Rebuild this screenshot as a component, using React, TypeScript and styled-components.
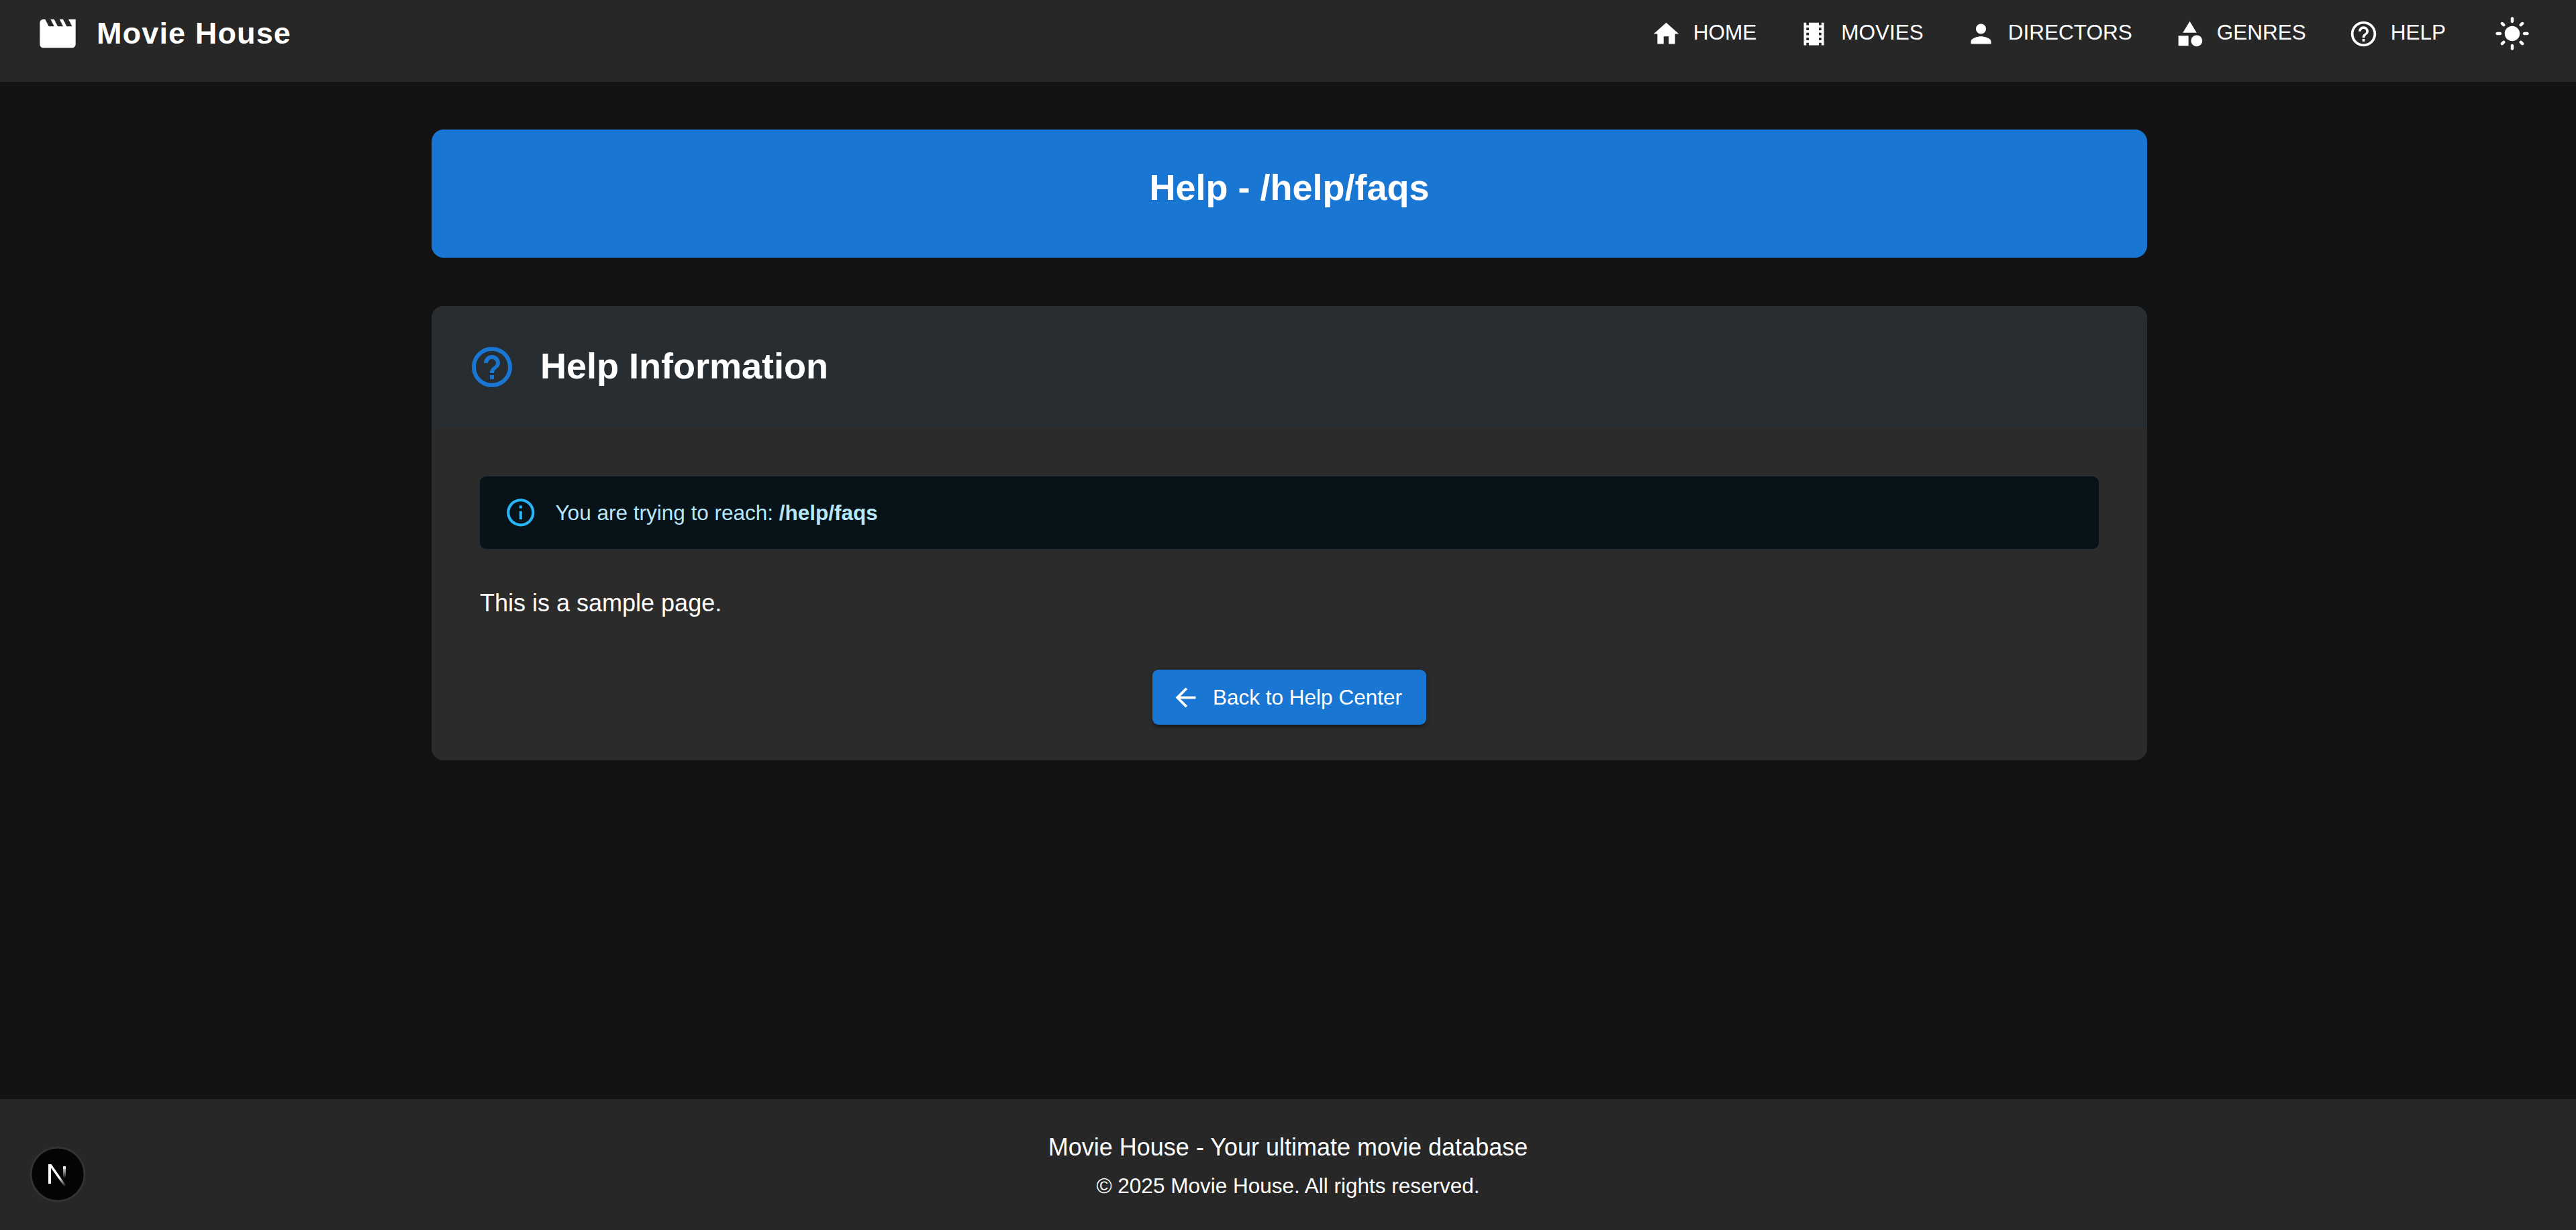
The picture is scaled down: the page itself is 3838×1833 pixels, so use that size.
import styled, { createGlobalStyle } from "styled-components";

const GlobalStyle = createGlobalStyle`
  html, body {
    margin: 0;
    padding: 0;
    background: #121212;
    color: #fff;
    font-family: "Liberation Sans", Arial, sans-serif;
  }
`;

const icons: Record<string, string> = {
  movie: "m18 4 2 4h-3l-2-4h-2l2 4h-3l-2-4H8l2 4H7L5 4H4c-1.1 0-1.99.9-1.99 2L2 18c0 1.1.9 2 2 2h16c1.1 0 2-.9 2-2V4h-4z",
  home: "M10 20v-6h4v6h5v-8h3L12 3 2 12h3v8z",
  film: "M18 3v2h-2V3H8v2H6V3H4v18h2v-2h2v2h8v-2h2v2h2V3h-2zM8 17H6v-2h2v2zm0-4H6v-2h2v2zm0-4H6V7h2v2zm10 8h-2v-2h2v2zm0-4h-2v-2h2v2zm0-4h-2V7h2v2z",
  person: "M12 12c2.21 0 4-1.79 4-4s-1.79-4-4-4-4 1.79-4 4 1.79 4 4 4zm0 2c-2.67 0-8 1.34-8 4v2h16v-2c0-2.66-5.33-4-8-4z",
  category: "m12 2-5.5 9h11zM17.5 13a4.5 4.5 0 1 0 0 9 4.5 4.5 0 0 0 0-9zM3 13.5h8v8H3z",
  help: "M11 18h2v-2h-2v2zm1-16C6.48 2 2 6.48 2 12s4.48 10 10 10 10-4.48 10-10S17.52 2 12 2zm0 18c-4.41 0-8-3.59-8-8s3.59-8 8-8 8 3.59 8 8-3.59 8-8 8zm0-14c-2.21 0-4 1.79-4 4h2c0-1.1.9-2 2-2s2 .9 2 2c0 2-3 1.75-3 5h2c0-2.25 3-2.5 3-5 0-2.21-1.79-4-4-4z",
  sun: "M12 7c-2.76 0-5 2.24-5 5s2.24 5 5 5 5-2.24 5-5-2.24-5-5-5zM2 13h2c.55 0 1-.45 1-1s-.45-1-1-1H2c-.55 0-1 .45-1 1s.45 1 1 1zm18 0h2c.55 0 1-.45 1-1s-.45-1-1-1h-2c-.55 0-1 .45-1 1s.45 1 1 1zM11 2v2c0 .55.45 1 1 1s1-.45 1-1V2c0-.55-.45-1-1-1s-1 .45-1 1zm0 18v2c0 .55.45 1 1 1s1-.45 1-1v-2c0-.55-.45-1-1-1s-1 .45-1 1zM5.99 4.58c-.39-.39-1.03-.39-1.41 0-.39.39-.39 1.03 0 1.41l1.06 1.06c.39.39 1.03.39 1.41 0s.39-1.03 0-1.41L5.99 4.58zm12.37 12.37c-.39-.39-1.03-.39-1.41 0-.39.39-.39 1.03 0 1.41l1.06 1.06c.39.39 1.03.39 1.41 0 .39-.39.39-1.03 0-1.41l-1.06-1.06zm1.06-10.96c.39-.39.39-1.03 0-1.41-.39-.39-1.03-.39-1.41 0l-1.06 1.06c-.39.39-.39 1.03 0 1.41s1.03.39 1.41 0l1.06-1.06zM7.05 18.36c.39-.39.39-1.03 0-1.41-.39-.39-1.03-.39-1.41 0l-1.06 1.06c-.39.39-.39 1.03 0 1.41s1.03.39 1.41 0l1.06-1.06z",
  info: "M11 7h2v2h-2zm0 4h2v6h-2zm1-9C6.48 2 2 6.48 2 12s4.48 10 10 10 10-4.48 10-10S17.52 2 12 2zm0 18c-4.41 0-8-3.59-8-8s3.59-8 8-8 8 3.59 8 8-3.59 8-8 8z",
  back: "M20 11H7.83l5.59-5.59L12 4l-8 8 8 8 1.41-1.41L7.83 13H20v-2z",
};

const Svg = styled.svg<{ $size: number; $color?: string }>`
  width: ${(p) => p.$size}px;
  height: ${(p) => p.$size}px;
  flex-shrink: 0;
  display: block;
  fill: ${(p) => p.$color || "#fff"};
`;

function Icon({ name, size, color }: { name: string; size: number; color?: string }) {
  return (
    <Svg viewBox="0 0 24 24" $size={size} $color={color}>
      <path d={icons[name]} />
    </Svg>
  );
}

const Page = styled.div`
  min-height: 100vh;
  display: flex;
  flex-direction: column;
  position: relative;
`;

const Header = styled.header`
  height: 122px;
  box-sizing: border-box;
  padding: 0 54px 22px;
  background: #272727;
  display: flex;
  align-items: center;
  justify-content: space-between;
`;

const Brand = styled.div`
  display: flex;
  align-items: center;
  gap: 26px;
`;

const BrandName = styled.div`
  font-size: 45px;
  font-weight: 700;
  letter-spacing: 1.125px;
  line-height: 1;
  margin-top: -2px;
`;

const Nav = styled.nav`
  display: flex;
  align-items: center;
`;

const NavLinks = styled.div`
  display: flex;
  align-items: center;
  gap: 63px;
`;

const NavLink = styled.a`
  display: flex;
  align-items: center;
  gap: 18px;
  font-size: 31.5px;
  line-height: 1;
  color: #fff;
  text-transform: uppercase;
`;

const NavLabel = styled.span`
  margin-top: -3px;
`;

const ThemeToggle = styled.button`
  margin-left: 72px;
  margin-right: 14px;
  padding: 0;
  border: 0;
  background: none;
  color: #fff;
  display: flex;
`;

const Main = styled.main`
  flex: 1;
  margin: 0 639px 0 643px;
  padding-top: 71px;
`;

const Hero = styled.section`
  height: 191px;
  box-sizing: border-box;
  padding-top: 54px;
  margin-bottom: 72px;
  background: #1976d2;
  border-radius: 18px;
  text-align: center;
`;

const HeroTitle = styled.h1`
  margin: 0;
  font-size: 54px;
  font-weight: 700;
  line-height: 64px;
`;

const Card = styled.section`
  background: #2b2b2b;
  border-radius: 18px;
  overflow: hidden;
`;

const CardHeader = styled.div`
  height: 181px;
  box-sizing: border-box;
  padding: 0 54px;
  display: flex;
  align-items: center;
  gap: 36px;
  background: #282d31;
`;

const CardTitle = styled.h2`
  margin: 0;
  font-size: 54px;
  font-weight: 700;
  line-height: 1.2;
  margin-top: -2px;
`;

const CardBody = styled.div`
  padding: 73px 72px 53px;
`;

const Notice = styled.div`
  height: 108px;
  box-sizing: border-box;
  padding: 0 36px;
  display: flex;
  align-items: center;
  gap: 27px;
  background: #071318;
  color: #b8e7fb;
  border-radius: 9px;
  font-size: 31.5px;
`;

const SampleText = styled.p`
  margin: 0;
  padding-top: 57px;
  font-size: 36px;
  line-height: 48px;
`;

const Actions = styled.div`
  display: flex;
  justify-content: center;
  padding-top: 75px;
`;

const BackButton = styled.a`
  height: 82px;
  box-sizing: border-box;
  padding: 0 36px 0 27px;
  display: flex;
  align-items: center;
  gap: 18px;
  background: #1976d2;
  color: #fff;
  border-radius: 9px;
  font-size: 31.5px;
  box-shadow: 0 7px 3px -4px rgba(0, 0, 0, 0.2), 0 4px 5px 0 rgba(0, 0, 0, 0.14), 0 2px 10px 0 rgba(0, 0, 0, 0.12);
`;

const Footer = styled.footer`
  height: 195px;
  box-sizing: border-box;
  padding-top: 49px;
  background: #272727;
  text-align: center;
`;

const Tagline = styled.div`
  font-size: 36px;
  line-height: 46px;
`;

const Copyright = styled.div`
  margin-top: 14px;
  font-size: 31.5px;
  line-height: 40px;
`;

const DevBadge = styled.div`
  position: absolute;
  left: 44px;
  bottom: 41px;
  width: 84px;
  height: 84px;
`;

const navItems = [
  { label: "Home", icon: "home" },
  { label: "Movies", icon: "film" },
  { label: "Directors", icon: "person" },
  { label: "Genres", icon: "category" },
  { label: "Help", icon: "help" },
];

export default function App() {
  return (
    <Page>
      <GlobalStyle />
      <Header>
        <Brand>
          <Icon name="movie" size={64} />
          <BrandName>Movie House</BrandName>
        </Brand>
        <Nav>
          <NavLinks>
            {navItems.map((item) => (
              <NavLink key={item.label}>
                <Icon name={item.icon} size={45} />
                <NavLabel>{item.label}</NavLabel>
              </NavLink>
            ))}
          </NavLinks>
          <ThemeToggle>
            <Icon name="sun" size={54} />
          </ThemeToggle>
        </Nav>
      </Header>
      <Main>
        <Hero>
          <HeroTitle>Help - /help/faqs</HeroTitle>
        </Hero>
        <Card>
          <CardHeader>
            <Icon name="help" size={72} color="#1976d2" />
            <CardTitle>Help Information</CardTitle>
          </CardHeader>
          <CardBody>
            <Notice>
              <Icon name="info" size={49.5} color="#29b6f6" />
              <span>
                You are trying to reach: <strong>/help/faqs</strong>
              </span>
            </Notice>
            <SampleText>This is a sample page.</SampleText>
            <Actions>
              <BackButton>
                <Icon name="back" size={45} />
                Back to Help Center
              </BackButton>
            </Actions>
          </CardBody>
        </Card>
      </Main>
      <Footer>
        <Tagline>Movie House - Your ultimate movie database</Tagline>
        <Copyright>© 2025 Movie House. All rights reserved.</Copyright>
      </Footer>
      <DevBadge>
        <svg viewBox="0 0 84 84" width="84" height="84">
          <defs>
            <linearGradient id="nDiag" gradientUnits="userSpaceOnUse" x1="28" y1="27" x2="54" y2="60">
              <stop offset="0.6" stopColor="#fff" />
              <stop offset="1" stopColor="#fff" stopOpacity="0" />
            </linearGradient>
            <linearGradient id="nStem" x1="0" y1="0" x2="0" y2="1">
              <stop offset="0" stopColor="#fff" />
              <stop offset="1" stopColor="#fff" stopOpacity="0" />
            </linearGradient>
          </defs>
          <circle cx="42" cy="42" r="40" fill="#050505" stroke="#333" strokeWidth="3" />
          <path d="M28 27h4v29h-4z" fill="#fff" />
          <path d="M28 27h4.5l21.5 31-2.5 2z" fill="url(#nDiag)" />
          <path d="M50 30h4v18h-4z" fill="url(#nStem)" />
        </svg>
      </DevBadge>
    </Page>
  );
}
